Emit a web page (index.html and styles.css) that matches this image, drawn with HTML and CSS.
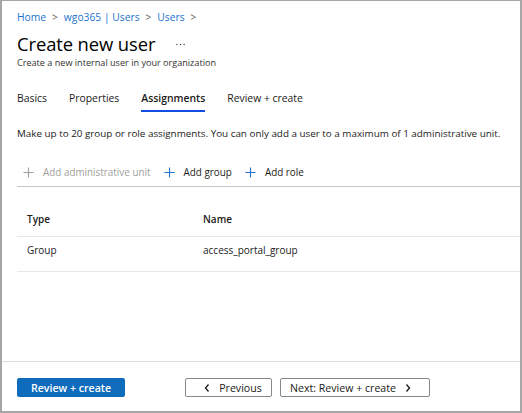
FILE: index.html
```html
<!DOCTYPE html>
<html>
<head>
<meta charset="utf-8">
<link rel="stylesheet" href="styles.css">
</head>
<body>
<div class="page">
  <div class="content">
    <nav class="crumbs">
      <a>Home</a><span class="sep">&gt;</span><a>wgo365 | Users</a><span class="sep">&gt;</span><a>Users</a><span class="sep">&gt;</span>
    </nav>
    <div class="title-row">
      <h1>Create new user</h1>
      <svg class="more" viewBox="0 0 10 3"><circle cx="1" cy="1.5" r="0.7"/><circle cx="5" cy="1.5" r="0.7"/><circle cx="9" cy="1.5" r="0.7"/></svg>
    </div>
    <p class="subtitle">Create a new internal user in your organization</p>
    <div class="tabs">
      <span class="tab">Basics</span>
      <span class="tab">Properties</span>
      <span class="tab active">Assignments</span>
      <span class="tab">Review + create</span>
    </div>
    <p class="desc">Make up to 20 group or role assignments. You can only add a user to a maximum of 1 administrative unit.</p>
    <div class="toolbar">
      <span class="tool disabled"><svg class="plus" viewBox="0 0 12 12"><path d="M6 0.5v11M0.5 6h11"/></svg>Add administrative unit</span>
      <span class="tool"><svg class="plus" viewBox="0 0 12 12"><path d="M6 0.5v11M0.5 6h11"/></svg>Add group</span>
      <span class="tool"><svg class="plus" viewBox="0 0 12 12"><path d="M6 0.5v11M0.5 6h11"/></svg>Add role</span>
    </div>
    <div class="table">
      <div class="row head"><span class="c1">Type</span><span class="c2">Name</span></div>
      <div class="row"><span class="c1">Group</span><span class="c2">access_portal_group</span></div>
    </div>
  </div>
  <div class="footer">
    <button class="btn primary">Review + create</button>
    <button class="btn prev"><svg class="chev" viewBox="0 0 6 10"><path d="M4.5 1.5L1.5 5l3 3.5"/></svg>Previous</button>
    <button class="btn next">Next: Review + create<svg class="chev" viewBox="0 0 6 10"><path d="M1.5 1.5L4.5 5l-3 3.5"/></svg></button>
  </div>
</div>
</body>
</html>
```
FILE: styles.css
```css
* { box-sizing: border-box; }
html, body { margin: 0; padding: 0; background: #fff; }
body { font-family: "Open Sans", "Noto Sans", sans-serif; color: #1b1a19; }
.page {
  width: 522px; height: 413px;
  border: 1px solid #a6a6a6;
  border-width: 1px 2px 2px 2px;
  display: flex; flex-direction: column;
}
.content { padding-left: 15px; flex: 1; }
.crumbs { margin-top: 8px; font-size: 10.3px; line-height: 16px; color: #1a73d0; display: flex; }
.crumbs a { color: #1a73d0; }
.crumbs .sep { color: #605e5c; margin: 0 6px; font-size: 10px; }
.title-row { display: flex; align-items: center; margin-top: 7px; }
h1 { margin: 0; font-size: 18.4px; font-weight: 400; line-height: 24px; color: #000; letter-spacing: -0.1px; }
.more { width: 9px; height: 3px; margin-left: 21px; fill: #333; }
.subtitle { margin: 0; font-size: 9.1px; line-height: 14px; color: #323130; }
.tabs { display: flex; gap: 22px; margin-top: 20px; }
.tab { font-size: 10.4px; line-height: 16px; padding-bottom: 4px; border-bottom: 2px solid transparent; color: #1b1a19; }
.tab.active { border-bottom-color: #0f4ee0; font-weight: 600; }
.desc { margin: 13px 0 0; font-size: 9.85px; line-height: 16px; color: #1b1a19; white-space: nowrap; }
.toolbar { display: flex; margin-top: 23px; padding: 0 0 6px 6px; border-bottom: 1px solid #c8c8c8; }
.tool { display: flex; align-items: center; font-size: 9.9px; line-height: 16px; margin-right: 13px; color: #1b1a19; }
.tool.disabled { color: #a19f9d; }
.plus { width: 11px; height: 11px; margin-right: 9px; fill: none; stroke: #1a73d0; stroke-width: 1.2; }
.tool.disabled .plus { stroke: #a19f9d; }
.row { display: flex; font-size: 10px; line-height: 16px; border-bottom: 1px solid #e8e8e8; padding: 5px 0 13px 10px; }
.row.head { padding: 24px 0 9px 10px; font-weight: 600; }
.c1 { width: 176px; }
.footer { border-top: 1px solid #e1dfdd; height: 50px; flex: none; display: flex; align-items: flex-start; padding: 16px 0 0 15px; }
.btn { font-family: "Open Sans", "Noto Sans", sans-serif; font-size: 10.6px; line-height: 16px; height: 19px; border-radius: 2px; padding: 0; display: flex; align-items: center; justify-content: center; }
.primary { width: 108px; background: #0f6cbd; color: #fff; border: 1px solid #0f6cbd; font-weight: 600; margin-right: 60px; }
.prev, .next { background: #fff; border: 1px solid #8a8886; color: #1b1a19; }
.prev { width: 87px; margin-right: 8px; }
.next { width: 150px; }
.chev { width: 6px; height: 10px; margin: 0 9px; fill: none; stroke: #1b1a19; stroke-width: 1.3; }
```
